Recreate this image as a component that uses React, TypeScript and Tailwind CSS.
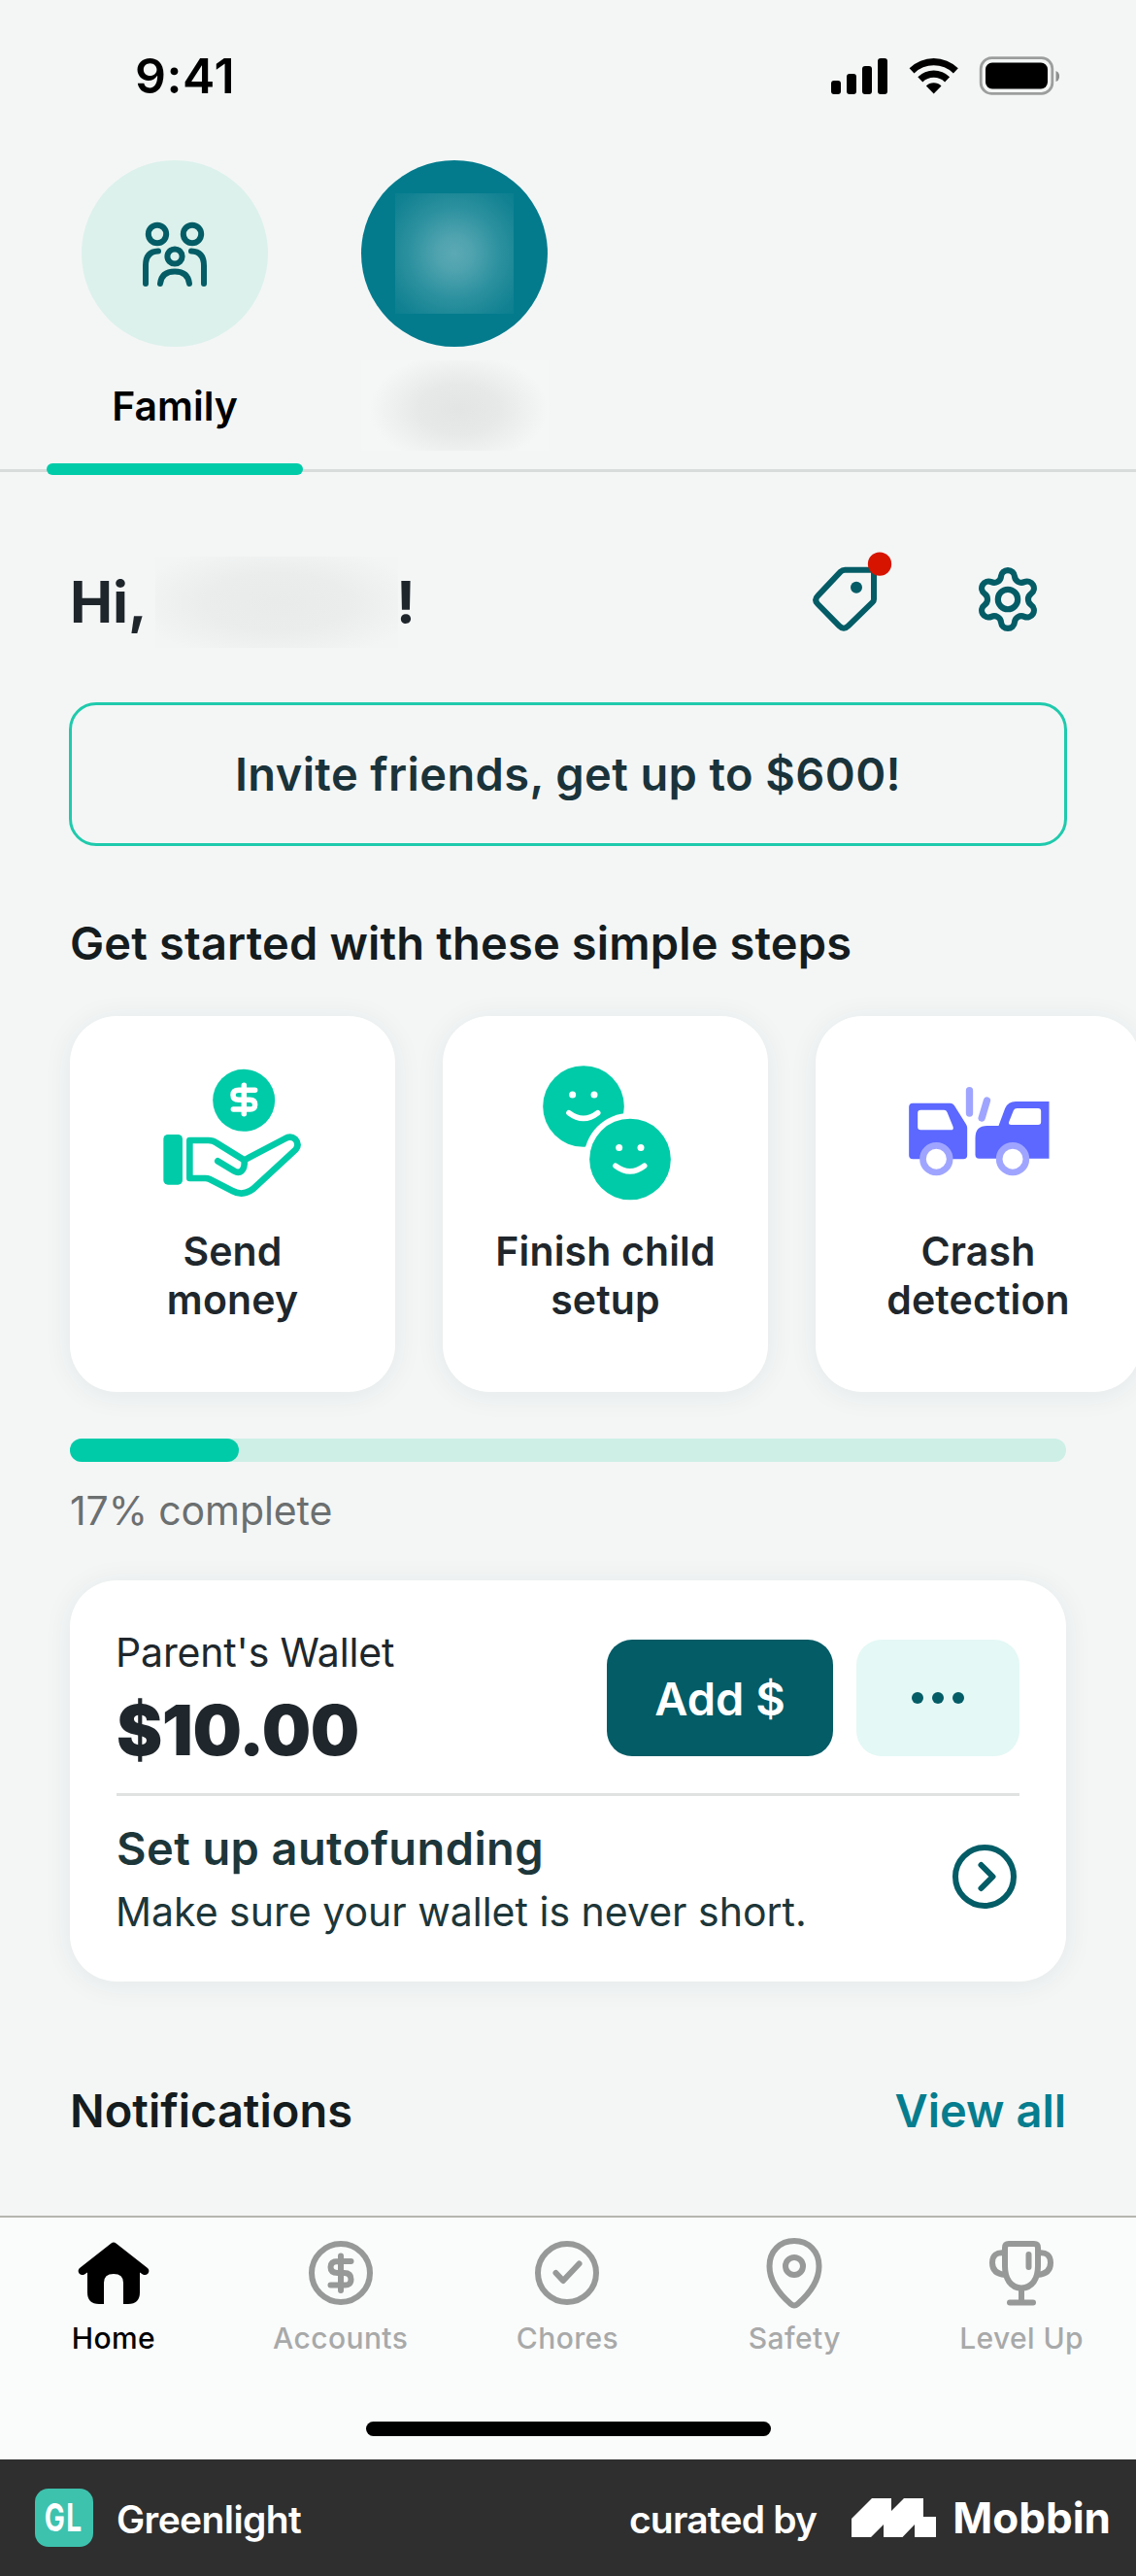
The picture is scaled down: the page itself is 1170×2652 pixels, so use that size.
import type { ReactNode } from 'react';

function StatusBar() {
  return (
    <div className="flex h-[156px] shrink-0 items-center justify-between pl-[139px] pr-[79px]">
      <span className="text-[50px] leading-[60px] font-semibold tracking-[0.6px] text-black">9:41</span>
      <svg className="h-[40px] w-[236px]" viewBox="0 0 236 40">
        <rect x="1" y="25" width="10" height="14" rx="3" />
        <rect x="17" y="18" width="10" height="21" rx="3" />
        <rect x="33" y="10" width="10" height="29" rx="3" />
        <rect x="49" y="2" width="10" height="37" rx="3" />
        <path d="M81.6 12.2A36 36 0 0 1 131.8 12.2L126.9 17.4A29 29 0 0 0 86.5 17.4Z" />
        <path d="M90.3 21.2A23.5 23.5 0 0 1 123.1 21.2L118.1 26.4A16.5 16.5 0 0 0 95.3 26.4Z" />
        <path d="M98.9 30.4A11 11 0 0 1 114.5 30.4L106.7 38.6Z" />
        <rect x="155.2" y="1.7" width="73.6" height="36.600" rx="11" fill="none" stroke="#9c9e9e" strokeWidth="2.8" />
        <rect x="160" y="6.5" width="64" height="27" rx="7" />
        <path d="M232.5 15q3.6 1 3.6 5.500t-3.6 5.500z" fill="#8e9090" />
      </svg>
    </div>
  );
}

function FamilyIcon() {
  return (
    <svg className="h-[68px] w-[68px]" viewBox="0 0 68 68" fill="none" stroke="#035c66" strokeWidth="6" strokeLinecap="round">
      <circle cx="16" cy="14" r="9.2" />
      <circle cx="52" cy="14" r="9.2" />
      <circle cx="34" cy="37" r="7.6" />
      <path d="M4 65V46.500Q4 32 17 31.600" />
      <path d="M64 65V46.500Q64 32 51 31.600" />
      <path d="M19 65C20 56 26 52.500 34 52.500S48 56 49 65" />
    </svg>
  );
}

function ProfileTabs() {
  return (
    <div className="flex h-[330px] shrink-0 gap-6 border-b-[3px] border-[#d8dcdb] pl-12">
      <div className="relative flex w-[264px] flex-col items-center pt-[9px]">
        <div className="flex h-48 w-48 items-center justify-center rounded-full bg-[#dcf1eb]">
          <FamilyIcon />
        </div>
        <span className="mt-[31px] text-[41px] leading-[60px] font-semibold text-black">Family</span>
        <div className="absolute -bottom-[6px] left-0 h-3 w-full rounded-full bg-[#00cba8]" />
      </div>
      <div className="flex w-[264px] flex-col items-center pt-[9px]">
        <div className="flex h-48 w-48 items-center justify-center rounded-full bg-[#037b8d]">
          <div className="h-[124px] w-[122px] bg-[radial-gradient(circle,#5ba9b4_0px,#4fa3af_18px,#2b909e_48px,#128292_76px,#0a7f8f_88px)]" />
        </div>
        <div className="mt-[14px] h-[93px] w-[193px] bg-[#f5f6f6]">
          <div className="h-full w-full bg-[radial-gradient(ellipse_92px_58px_at_52%_54%,#e3e4e4_0%,#e7e8e8_45%,#f0f1f1_80%,#f5f6f6_100%)]" />
        </div>
      </div>
    </div>
  );
}

function TagIcon() {
  return (
    <svg className="h-[83px] w-[83px]" viewBox="48 40 249 249">
      <path
        d="M151 96H240V187Q240 192 236 196L161 269Q147 283 133 269L67 202Q54 189 67 176L137 102Q143 96 151 96Z"
        fill="none" stroke="#035c66" strokeWidth="18" strokeLinejoin="round"
      />
      <circle cx="186" cy="150" r="18" fill="#035c66" />
      <circle cx="258" cy="78" r="36.500" fill="#d71400" />
    </svg>
  );
}

function GearIcon() {
  return (
    <svg className="h-[72px] w-[72px]" viewBox="0 0 24 24" fill="none" stroke="#035c66" strokeWidth="2.050" strokeLinecap="round" strokeLinejoin="round">
      <path d="M9.671 4.136a2.34 2.34 0 0 1 4.659 0 2.34 2.34 0 0 0 3.319 1.915 2.34 2.34 0 0 1 2.33 4.033 2.34 2.34 0 0 0 0 3.831 2.34 2.34 0 0 1-2.33 4.033 2.34 2.34 0 0 0-3.319 1.915 2.34 2.34 0 0 1-4.659 0 2.34 2.34 0 0 0-3.32-1.915 2.34 2.34 0 0 1-2.33-4.033 2.34 2.34 0 0 0 0-3.831A2.34 2.34 0 0 1 6.35 6.051a2.34 2.34 0 0 0 3.319-1.915" />
      <circle cx="12" cy="12" r="3.400" />
    </svg>
  );
}

function Greeting() {
  return (
    <div className="mt-[87px] flex h-[94px] items-start justify-between">
      <div className="flex items-center text-[59px] leading-[90px] font-bold text-[#1f262b]">
        <span className="w-[81px]">Hi,</span>
        <div className="ml-[7px] h-[94px] w-[250px] bg-[radial-gradient(ellipse_150px_60px,#e9eaea_0%,#ebecec_50%,#f3f5f5_100%)]" />
        <span className="-ml-[2px]">!</span>
      </div>
      <div className="-mt-[5px] flex items-start gap-[83px] pr-[24px]">
        <TagIcon />
        <div className="mt-[13px]"><GearIcon /></div>
      </div>
    </div>
  );
}

function SendMoneyIcon() {
  return (
    <svg className="h-[147px] w-[150px]" viewBox="313 192 450 441" fill="none" stroke="#00cba8" strokeLinecap="round" strokeLinejoin="round">
      <circle cx="571.500" cy="308.500" r="96" fill="#00cba8" stroke="none" />
      <path d="M606 277H556Q538 277 538 292T556 307H590Q606 307 606 322T590 336H539M572 262V350" stroke="#fff" strokeWidth="16.500" />
      <rect x="323" y="414" width="59" height="155" rx="14" fill="#00cba8" stroke="none" />
      <path d="M404 432H462Q476 432 487 440L573 493L698 427Q716 416 730 428Q744 444 732 460L600 582Q568 606 536 588L466 552Q460 549 452 549H404Z" strokeWidth="20" />
      <path d="M573 493Q575 517 565 526Q555 534 542 527L491 496" strokeWidth="20" />
    </svg>
  );
}

function Smile({ x, y }: { x: number; y: number }) {
  return (
    <g transform={`translate(${x} ${y})`}>
      <circle r="125.500" fill="#00cba8" />
      <circle cx="-34" cy="-36" r="10.500" fill="#fff" />
      <circle cx="33" cy="-36" r="10.500" fill="#fff" />
      <path d="M-45 20Q0 54 44 20" fill="none" stroke="#fff" strokeWidth="17" strokeLinecap="round" />
    </g>
  );
}

function ChildrenIcon() {
  return (
    <svg className="h-[147px] w-[150px]" viewBox="327 192 450 441">
      <Smile x={483} y={327} />
      <circle cx="627" cy="490.500" r="143" fill="#fff" />
      <Smile x={627} y={490.5} />
    </svg>
  );
}

function CrashIcon() {
  return (
    <svg className="h-[147px] w-[150px]" viewBox="368.500 192 450 441">
      <path fillRule="evenodd" fill="#5c68ff" d="M390 317H505Q513 317 518 324L555 383Q558 388 558 394V478Q558 490 546 490H390Q378 490 378 478V329Q378 317 390 317ZM414 338Q405 338 405 347V391Q405 400 414 400H507Q518 400 514 389L496 345Q493 338 486 338Z" />
      <path fillRule="evenodd" fill="#5c68ff" d="M811 312H708Q684 312 675 333L655 387H620Q583 387 583 424V476Q583 488 595 488H811ZM712 333Q704 333 701 340L687 375Q684 384 693 384H777Q786 384 786 375V342Q786 333 777 333Z" />
      <g fill="#fff" stroke="#9fa5ff" strokeWidth="20">
        <circle cx="462.500" cy="489.500" r="41.500" />
        <circle cx="698.500" cy="489.500" r="41.500" />
      </g>
      <path d="M565 278V348M619 309L603 363" stroke="#9fa5ff" strokeWidth="22" strokeLinecap="round" />
    </svg>
  );
}

function StepCard({ icon, first, second }: { icon: ReactNode; first: string; second: string }) {
  return (
    <div className="flex h-[387px] w-[335px] shrink-0 flex-col items-center rounded-[48px] bg-white pt-12 shadow-[0_3px_30px_rgba(10,60,50,0.07)]">
      {icon}
      <p className="mt-[22px] text-center text-[41px] leading-[50px] font-semibold tracking-[0.15px] text-[#20272c]">
        {first}
        <br />
        {second}
      </p>
    </div>
  );
}

function WalletCard() {
  return (
    <div className="mt-[47px] flex h-[413px] flex-col rounded-[48px] bg-white px-12 shadow-[0_3px_30px_rgba(10,60,50,0.07)]">
      <div className="flex h-[219px] justify-between">
        <div className="pt-[49px] text-[#20272c]">
          <p className="-ml-px text-[41px] leading-[50px] tracking-[-0.15px]">Parent's Wallet</p>
          <p className="mt-[15px] text-[71px] leading-[80px] font-black tracking-[-0.5px]">$10.00</p>
        </div>
        <div className="flex gap-6 pt-[61px]">
          <button className="h-[120px] w-[233px] rounded-[26px] bg-[#035c66] pt-px text-[47px] leading-[60px] font-semibold text-white">Add $</button>
          <button className="flex h-[120px] w-[168px] items-center justify-center gap-[9px] rounded-[26px] bg-[#e4f8f5]">
            <span className="h-3 w-3 rounded-full bg-[#035c66]" />
            <span className="h-3 w-3 rounded-full bg-[#035c66]" />
            <span className="h-3 w-3 rounded-full bg-[#035c66]" />
          </button>
        </div>
      </div>
      <div className="h-[3px] shrink-0 bg-[#e0e2e2]" />
      <div className="flex justify-between text-[#1d3639]">
        <div className="pt-[24px]">
          <p className="text-[47px] leading-[60px] font-semibold tracking-[0.4px]">Set up autofunding</p>
          <p className="-ml-px mt-[10px] text-[41px] leading-[50px]">Make sure your wallet is never short.</p>
        </div>
        <svg className="mt-[48px] mr-px h-[70px] w-[70px]" viewBox="0 0 70 70" fill="none" stroke="#035c66" strokeWidth="6" strokeLinecap="round" strokeLinejoin="round">
          <circle cx="35" cy="35" r="30" />
          <path d="M31.500 23L43.500 35L31.500 47" />
        </svg>
      </div>
    </div>
  );
}

function HomeIcon() {
  return (
    <svg className="h-[72px] w-[80px]" viewBox="0 0 80 72">
      <path d="M37.500 5.500Q40 3.500 42.500 5.500L75 31Q77.500 33.500 75.500 36.500Q73 39 70 37.500L67 35.500V56Q67 68 55 68H50V46Q50 37 40 37T30 46V68H25Q13 68 13 56V35.500L10 37.500Q7 39 4.500 36.500Q2.500 33.500 5 31Z" />
    </svg>
  );
}

function NavIcon({ children }: { children: ReactNode }) {
  return (
    <svg className="-my-0.5 h-[76px] w-[76px]" viewBox="0 0 76 76" fill="none" stroke="#979898" strokeWidth="6" strokeLinecap="round" strokeLinejoin="round">
      {children}
    </svg>
  );
}

function NavItem({ label, active, icon }: { label: string; active?: boolean; icon: ReactNode }) {
  return (
    <div className="flex flex-col items-center">
      {icon}
      <span className={`mt-[13px] text-[30px] leading-[36px] font-medium tracking-[0.4px] ${active ? 'text-black' : 'text-[#a8a9a9]'}`}>{label}</span>
    </div>
  );
}

function BottomNav() {
  return (
    <div className="flex h-[251px] shrink-0 flex-col items-center border-t-2 border-[#b5b6ae] bg-[#fafbfb] pt-[21px]">
      <div className="grid w-full grid-cols-5 pr-px">
        <NavItem label="Home" active icon={<HomeIcon />} />
        <NavItem
          label="Accounts"
          icon={
            <NavIcon>
              <circle cx="38" cy="38" r="30" />
              <path d="M48.500 26H35Q27.500 26 27.500 32T35 38H41.500Q48.500 38 48.500 44.500T41.500 50.500H27.500M38 20.500V56" />
            </NavIcon>
          }
        />
        <NavItem
          label="Chores"
          icon={
            <NavIcon>
              <circle cx="38" cy="38" r="30" />
              <path d="M26.500 38L34 46L50.500 28.500" />
            </NavIcon>
          }
        />
        <NavItem
          label="Safety"
          icon={
            <NavIcon>
              <path d="M38 5C23 5 12.500 16 12.500 31C12.500 46 23 60 34.500 70Q38 73 41.500 70C53 60 63.500 46 63.500 31C63.500 16 53 5 38 5Z" />
              <circle cx="38" cy="31" r="9" />
            </NavIcon>
          }
        />
        <NavItem
          label="Level Up"
          icon={
            <NavIcon>
              <path d="M25 8H51Q55 8 55 12V31C55 44 49 53.500 38 53.500S21 44 21 31V12Q21 8 25 8Z" />
              <path d="M38 54V68M26 68.500H50M45.500 19V32M20.500 17.500Q8 16 8 27.500T21.500 40M55.500 17.500Q68 16 68 27.500T54.500 40" />
            </NavIcon>
          }
        />
      </div>
      <div className="mt-[68px] h-[15px] w-[417px] rounded-full bg-black" />
    </div>
  );
}

function Footer() {
  return (
    <div className="flex h-[120px] shrink-0 items-center justify-between bg-[#2f2f2f] pr-[26px] pl-9 text-white">
      <div className="flex items-center">
        <div className="flex h-[60px] w-[60px] items-center justify-center rounded-[14px] bg-[#3dc2ae]">
          <span className="scale-x-[0.72] text-[39px] leading-[40px] font-bold tracking-[2px]">GL</span>
        </div>
        <span className="mt-1 ml-6 text-[39px] leading-[60px] font-semibold tracking-[-0.6px]">Greenlight</span>
      </div>
      <div className="flex items-center">
        <span className="mt-1 text-[39px] leading-[60px] font-semibold tracking-[-0.8px]">curated by</span>
        <svg className="ml-9 h-[40px] w-[87px]" viewBox="0 0 87 40" fill="#fff">
          <path d="M0 21L21 0H41V13L54 0H74V19H87V40H65V27L52.500 40H33V27L20 40H0Z" />
        </svg>
        <span className="ml-[17px] text-[44px] leading-[60px] font-bold">Mobbin</span>
      </div>
    </div>
  );
}

export default function App() {
  return (
    <div className="flex h-[2652px] w-[1170px] flex-col overflow-hidden bg-[#f4f6f6] font-[Inter,sans-serif]">
      <StatusBar />
      <ProfileTabs />
      <div className="flex-1 px-[72px]">
        <Greeting />
        <button className="mt-[56px] -mx-px block h-[148px] w-[1028px] rounded-[28px] border-[3px] border-[#1fcaac] text-[47px] leading-[60px] font-semibold tracking-[0.4px] text-[#1a333a]">
          Invite friends, get up to $600!
        </button>
        <h2 className="mt-[70px] text-[47px] leading-[60px] font-semibold tracking-[0.15px] text-[#151c1e]">Get started with these simple steps</h2>
        <div className="mt-[45px] flex gap-[49px]">
          <StepCard icon={<SendMoneyIcon />} first="Send" second="money" />
          <StepCard icon={<ChildrenIcon />} first="Finish child" second="setup" />
          <StepCard icon={<CrashIcon />} first="Crash" second="detection" />
        </div>
        <div className="mt-12 h-6 rounded-full bg-[#cdefe6]">
          <div className="h-6 w-[17%] rounded-full bg-[#00cba8]" />
        </div>
        <p className="mt-[25px] text-[41px] leading-[50px] tracking-[-0.1px] text-[#6b6f70]">17% complete</p>
        <WalletCard />
        <div className="mt-[103px] flex justify-between text-[47px] leading-[60px] font-semibold">
          <h2 className="text-[#151c1e]">Notifications</h2>
          <a className="text-[#067d8e]">View all</a>
        </div>
      </div>
      <BottomNav />
      <Footer />
    </div>
  );
}
